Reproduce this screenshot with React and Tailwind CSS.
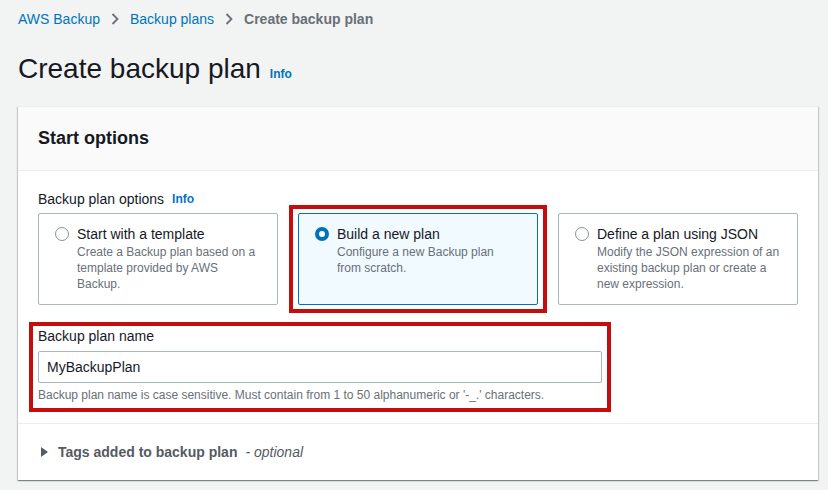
import React from "react";

function Chevron() {
  return (
    <svg width="10" height="14" viewBox="0 0 10 14" className="mx-[10px]">
      <path d="M2.5 2 L7.5 7 L2.5 12" fill="none" stroke="#687078" strokeWidth="1.8" />
    </svg>
  );
}

function Radio({ checked }) {
  return checked ? (
    <span className="w-[14px] h-[14px] rounded-full bg-[#0073bb] flex items-center justify-center shrink-0">
      <span className="w-[6px] h-[6px] rounded-full bg-white" />
    </span>
  ) : (
    <span className="w-[14px] h-[14px] rounded-full border-[1.5px] border-[#879596] bg-white shrink-0" />
  );
}

function Tile({ checked, title, desc, highlight }) {
  return (
    <div
      className={
        "relative h-[92px] rounded-[2px] border pl-[16px] pr-3 pt-[10px] " +
        (checked ? "border-[#0073bb] bg-[#f1faff]" : "border-[#aab7b8] bg-white")
      }
    >
      {highlight && (
        <div className="absolute -left-[10px] -right-[10px] -top-[9px] -bottom-[9px] border-[4px] border-[#c40d0d] pointer-events-none" />
      )}
      <div className="flex items-center h-5">
        <Radio checked={checked} />
        <span className="ml-[8px] text-[14px] text-[#16191f]">{title}</span>
      </div>
      <div className="ml-[22px] text-[12px] leading-4 text-[#687078]">{desc}</div>
    </div>
  );
}

export default function App() {
  return (
    <div
      className="w-[828px] h-[490px] bg-[#f2f3f3] pl-[18px] pr-[10px] pt-[9px] overflow-hidden"
      style={{ fontFamily: '"Liberation Sans", Arial, sans-serif' }}
    >
      <div className="flex items-center h-5 text-[14px]">
        <span className="text-[#0073bb]">AWS Backup</span>
        <Chevron />
        <span className="text-[#0073bb]">Backup plans</span>
        <Chevron />
        <span className="text-[#687078] font-bold">Create backup plan</span>
      </div>
      <div className="flex items-baseline mt-[22px] h-9">
        <span className="text-[28px] leading-9 text-[#16191f]">Create backup plan</span>
        <span className="ml-[9px] text-[12px] font-bold text-[#0073bb]">Info</span>
      </div>
      <div className="mt-[19px] bg-white border-t border-[#eaeded] shadow-[0_1px_1px_0_rgba(0,28,36,0.3),1px_1px_1px_0_rgba(0,28,36,0.15),-1px_1px_1px_0_rgba(0,28,36,0.15)]">
        <div className="h-[64px] bg-[#fafafa] border-b border-[#eaeded] flex items-center px-5">
          <span className="text-[18px] font-bold text-[#16191f]">Start options</span>
        </div>
        <div className="px-5 pt-[18px] pb-5 border-b border-[#eaeded]">
          <div className="flex items-center h-5 text-[14px] text-[#16191f]">
            Backup plan options
            <span className="ml-[8px] text-[12px] font-bold text-[#0073bb]">Info</span>
          </div>
          <div className="mt-1 grid grid-cols-3 gap-5">
            <Tile
              title="Start with a template"
              desc={<>Create a Backup plan based on a<br />template provided by AWS<br />Backup.</>}
            />
            <Tile
              checked
              highlight
              title="Build a new plan"
              desc={<>Configure a new Backup plan<br />from scratch.</>}
            />
            <Tile
              title="Define a plan using JSON"
              desc={<>Modify the JSON expression of an<br />existing backup plan or create a<br />new expression.</>}
            />
          </div>
          <div className="relative mt-[21px] w-[564px]">
            <div className="absolute -left-[9px] -right-[9px] -top-[4px] -bottom-[9px] border-[4px] border-[#c40d0d] pointer-events-none" />
            <div className="h-5 text-[14px] text-[#16191f] flex items-center">Backup plan name</div>
            <div className="mt-[5px] h-[32px] border border-[#aab7b8] rounded-[2px] flex items-center pl-[8px] text-[14px] text-[#16191f]">
              MyBackupPlan
            </div>
            <div className="mt-1 text-[12px] leading-4 text-[#687078]">
              Backup plan name is case sensitive. Must contain from 1 to 50 alphanumeric or '-_.' characters.
            </div>
          </div>
        </div>
        <div className="h-[56px] flex items-center pl-[23px]">
          <svg width="7" height="10" viewBox="0 0 7 10">
            <path d="M0 0 L7 5 L0 10 Z" fill="#545b64" />
          </svg>
          <span className="ml-[10px] text-[14px] font-bold text-[#545b64]">Tags added to backup plan</span>
          <span className="ml-[8px] text-[14px] italic text-[#545b64]">- optional</span>
        </div>
      </div>
    </div>
  );
}
